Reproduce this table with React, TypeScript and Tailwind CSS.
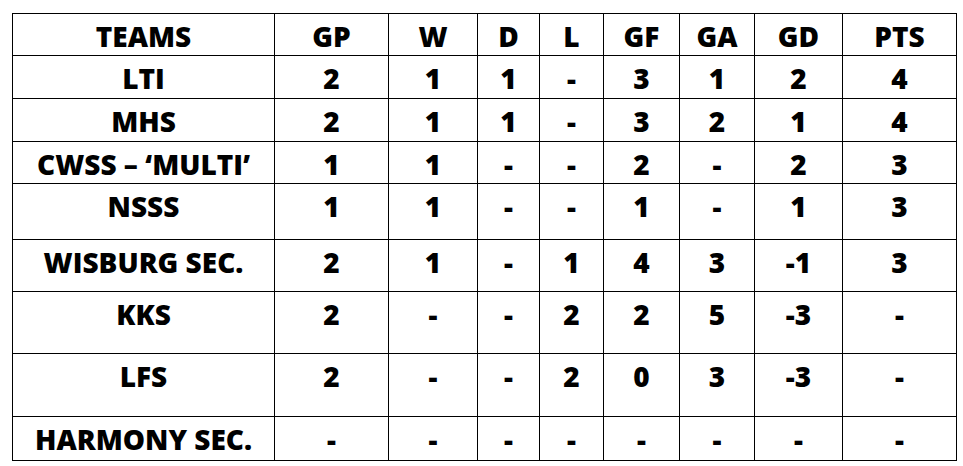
const columns = [
  { label: "TEAMS", w: "w-[262px]" },
  { label: "GP", w: "w-[114px]" },
  { label: "W", w: "w-[89px]" },
  { label: "D", w: "w-[62px]" },
  { label: "L", w: "w-[64px]" },
  { label: "GF", w: "w-[76px]" },
  { label: "GA", w: "w-[75px]" },
  { label: "GD", w: "w-[88px]" },
  { label: "PTS", w: "w-[114px]" },
];

const rows = [
  { h: "h-[43px]", cells: ["LTI", "2", "1", "1", "-", "3", "1", "2", "4"] },
  { h: "h-[43px]", cells: ["MHS", "2", "1", "1", "-", "3", "2", "1", "4"] },
  { h: "h-[42px]", cells: ["CWSS – ‘MULTI’", "1", "1", "-", "-", "2", "-", "2", "3"] },
  { h: "h-[56px]", cells: ["NSSS", "1", "1", "-", "-", "1", "-", "1", "3"] },
  { h: "h-[52px]", cells: ["WISBURG SEC.", "2", "1", "-", "1", "4", "3", "-1", "3"] },
  { h: "h-[62px]", cells: ["KKS", "2", "-", "-", "2", "2", "5", "-3", "-"] },
  { h: "h-[63px]", cells: ["LFS", "2", "-", "-", "2", "0", "3", "-3", "-"] },
  { h: "h-[44px]", cells: ["HARMONY SEC.", "-", "-", "-", "-", "-", "-", "-", "-"] },
];

export default function App() {
  return (
    <div className="w-[963px] h-[466px] bg-white pl-[12px] pt-[13px] font-['Open_Sans',sans-serif] text-black">
      <table className="table-fixed border-collapse w-[945px]">
        <thead>
          <tr className="h-[42px]">
            {columns.map((c) => (
              <th key={c.label} className={`${c.w} border border-black align-top pt-[8px] text-[28px] leading-none font-extrabold text-center`}>
                {c.label}
              </th>
            ))}
          </tr>
        </thead>
        <tbody>
          {rows.map((r) => (
            <tr key={r.cells[0]} className={r.h}>
              {r.cells.map((v, i) => (
                <td key={i} className="border border-black align-top pt-[8px] text-[28px] leading-none font-extrabold text-center">
                  {v}
                </td>
              ))}
            </tr>
          ))}
        </tbody>
      </table>
    </div>
  );
}
